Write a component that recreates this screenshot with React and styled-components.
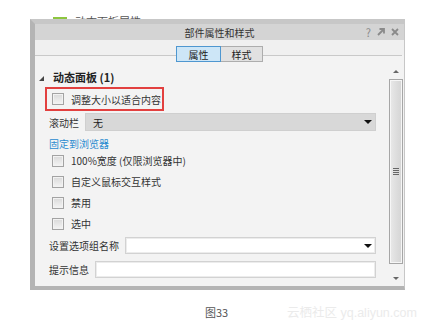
import React from "react";
import styled, { createGlobalStyle } from "styled-components";

const Global = createGlobalStyle`
  html, body { margin: 0; padding: 0; background: #ffffff; }
  body { font-family: "Noto Sans CJK SC", "Noto Sans", sans-serif; font-size: 10px; color: #333; }
  * { box-sizing: border-box; }
`;

const Page = styled.div`
  width: 444px;
  height: 333px;
  overflow: hidden;
  background: #fff;
`;

const TopStrip = styled.div`
  height: 19px;
  overflow: hidden;
  display: flex;
  align-items: flex-start;
  gap: 8px;
  padding: 17px 0 0 53px;
`;

const GreenIcon = styled.span`
  width: 14px;
  height: 10px;
  background: #8dc63f;
`;

const TopText = styled.span`
  font-size: 11px;
  line-height: 11px;
  color: #555;
  margin-top: -1px;
`;

const Frame = styled.div`
  margin-left: 30px;
  width: 375px;
  border-left: 5px solid #b4b4b4;
  border-top: 5px solid #c7c7c7;
  border-bottom: 4px solid #b4b4b4;
  border-right: 1px solid #c7c7c7;
  background: #f3f3f3;
`;

const TitleBar = styled.div`
  height: 16px;
  background: #d4d4d4;
  position: relative;
  display: flex;
  align-items: center;
  justify-content: center;
  font-size: 10px;
  color: #333;
`;

const TitleIcons = styled.div`
  position: absolute;
  right: 5px;
  top: 0;
  height: 16px;
  display: flex;
  align-items: center;
  gap: 6px;
  color: #8a8a8a;
  font-size: 11px;
`;

const TabArea = styled.div`
  height: 24px;
  position: relative;
  display: flex;
  justify-content: center;
  padding-top: 6px;
  background: linear-gradient(#f0f0f0 0 15px, #f3f3f3 15px);
`;

const TabLine = styled.div`
  position: absolute;
  left: 0;
  right: 2px;
  top: 15px;
  height: 1px;
  background: #c9c9c9;
`;

const Tab = styled.div`
  position: relative;
  height: 16px;
  width: ${(p) => p.$w}px;
  display: flex;
  align-items: center;
  justify-content: center;
  font-size: 10px;
  color: #222;
  background: ${(p) => (p.$active ? "#cde6f7" : "#e1e1e1")};
  border: 1px solid ${(p) => (p.$active ? "#4f97d0" : "#adadad")};
  margin-left: ${(p) => (p.$active ? 0 : -1)}px;
  z-index: ${(p) => (p.$active ? 2 : 1)};
`;

const Body = styled.div`
  height: 222px;
  display: flex;
`;

const Main = styled.div`
  flex: 1;
  display: flex;
  flex-direction: column;
  padding: 6px 12px 0 4px;
`;

const Header = styled.div`
  height: 14px;
  display: flex;
  align-items: center;
  gap: 9px;
  font-size: 11px;
  font-weight: bold;
  color: #222;
  margin-bottom: 3px;
`;

const Tri = styled.span`
  width: 0;
  height: 0;
  border-left: 5px solid transparent;
  border-bottom: 5px solid #444;
  margin-top: 3px;
`;

const Highlight = styled.div`
  height: 24px;
  width: 119px;
  margin-left: 6px;
  border: 2px solid #e2403f;
  display: flex;
  align-items: center;
  gap: 7px;
  padding-left: 5px;
  margin-bottom: 2px;
`;

const Check = styled.span`
  width: 12px;
  height: 12px;
  flex: none;
  border: 1px solid #a3a3a3;
  background: linear-gradient(#d9d9d9, #f4f4f4);
  box-shadow: inset 0 0 0 1px #f2f2f2;
`;

const Label = styled.span`
  font-size: 10px;
  color: #333;
  white-space: nowrap;
`;

const FieldRow = styled.div`
  height: ${(p) => p.$h}px;
  display: flex;
  align-items: center;
  gap: 6px;
  padding-left: 10px;
  margin-bottom: ${(p) => p.$mb || 0}px;
`;

const Field = styled.div`
  flex: 1;
  align-self: stretch;
  display: flex;
  align-items: center;
  justify-content: space-between;
  padding: 0 3px 0 7px;
  background: ${(p) => (p.$grey ? "#d8d8d8" : "#ffffff")};
  border: 1px solid ${(p) => (p.$grey ? "#cfcfcf" : "#d2d2d2")};
  box-shadow: ${(p) => (p.$grey ? "none" : "inset 0 0 0 1px #ececec")};
  font-size: 10px;
  color: #222;
`;

const Arrow = styled.span`
  width: 0;
  height: 0;
  border-left: 4px solid transparent;
  border-right: 4px solid transparent;
  border-top: 4px solid #111;
`;

const Link = styled.div`
  height: 14px;
  display: flex;
  align-items: center;
  padding-left: 10px;
  color: #2a8bd0;
  font-size: 10px;
`;

const CheckRow = styled.div`
  height: 21px;
  display: flex;
  align-items: center;
  gap: 7px;
  padding-left: 13px;
`;

const Scroll = styled.div`
  width: 15px;
  display: flex;
  flex-direction: column;
  align-items: center;
  margin-right: 1px;
`;

const ScrollBtn = styled.div`
  height: ${(p) => p.$h}px;
  width: 100%;
  display: flex;
  align-items: center;
  justify-content: center;
`;

const SmallTri = styled.span`
  width: 0;
  height: 0;
  border-left: 3px solid transparent;
  border-right: 3px solid transparent;
  ${(p) => (p.$up ? "border-bottom: 3px solid #666;" : "border-top: 3px solid #666;")}
`;

const Thumb = styled.div`
  width: 14px;
  height: 185px;
  border: 1px solid #a6a6a6;
  background: linear-gradient(90deg, #e9e9e9, #dedede 50%, #d4d4d4);
  box-shadow: inset 0 0 0 1px #f6f6f6;
  display: flex;
  align-items: center;
  justify-content: center;
`;

const Track = styled.div`
  flex: 1;
`;

const Grip = styled.div`
  width: 6px;
  height: 7px;
  background: repeating-linear-gradient(#666 0 1px, transparent 1px 2px);
`;

const Footer = styled.div`
  height: 43px;
  display: flex;
  align-items: center;
  padding-left: 205px;
`;

const Caption = styled.span`
  font-size: 11px;
  color: #555;
  width: 82px;
`;

const Watermark = styled.span`
  font-family: "Liberation Sans", "Noto Sans CJK SC", sans-serif;
  font-size: 12.5px;
  color: #ebebeb;
  white-space: nowrap;
`;

export default function App() {
  return (
    <Page>
      <Global />
      <TopStrip>
        <GreenIcon />
        <TopText>动态面板属性</TopText>
      </TopStrip>
      <Frame>
        <TitleBar>
          部件属性和样式
          <TitleIcons>
            <span>?</span>
            <svg width="8" height="8" viewBox="0 0 8 8">
              <path d="M1 7 L6 2 M2.5 1 H7 V5.5" stroke="#8a8a8a" strokeWidth="1.8" fill="none" />
            </svg>
            <svg width="8" height="8" viewBox="0 0 8 8">
              <path d="M1 1 L7 7 M7 1 L1 7" stroke="#8a8a8a" strokeWidth="1.8" />
            </svg>
          </TitleIcons>
        </TitleBar>
        <TabArea>
          <TabLine />
          <Tab $active $w={45}>属性</Tab>
          <Tab $w={43}>样式</Tab>
        </TabArea>
        <Body>
          <Main>
            <Header>
              <Tri />
              动态面板 (1)
            </Header>
            <Highlight>
              <Check />
              <Label>调整大小以适合内容</Label>
            </Highlight>
            <FieldRow $h={18} $mb={5}>
              <Label>滚动栏</Label>
              <Field $grey>
                无
                <Arrow />
              </Field>
            </FieldRow>
            <Link>固定到浏览器</Link>
            <CheckRow>
              <Check />
              <Label>100%宽度 (仅限浏览器中)</Label>
            </CheckRow>
            <CheckRow>
              <Check />
              <Label>自定义鼠标交互样式</Label>
            </CheckRow>
            <CheckRow>
              <Check />
              <Label>禁用</Label>
            </CheckRow>
            <CheckRow>
              <Check />
              <Label>选中</Label>
            </CheckRow>
            <div style={{ height: 3 }} />
            <FieldRow $h={17} $mb={7}>
              <Label>设置选项组名称</Label>
              <Field>
                <span />
                <Arrow />
              </Field>
            </FieldRow>
            <FieldRow $h={17}>
              <Label>提示信息</Label>
              <Field />
            </FieldRow>
          </Main>
          <Scroll>
            <ScrollBtn $h={15}>
              <SmallTri $up />
            </ScrollBtn>
            <Thumb>
              <Grip />
            </Thumb>
            <Track />
            <ScrollBtn $h={15}>
              <SmallTri />
            </ScrollBtn>
          </Scroll>
        </Body>
      </Frame>
      <Footer>
        <Caption>图33</Caption>
        <Watermark>云栖社区 yq.aliyun.com</Watermark>
      </Footer>
    </Page>
  );
}
